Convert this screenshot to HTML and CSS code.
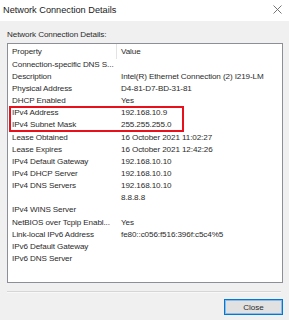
FILE: index.html
```html
<!DOCTYPE html>
<html lang="en">
<head>
    <meta charset="UTF-8">
    <meta name="viewport" content="width=device-width, initial-scale=1.0">
    <title>Network Connection Details</title>
    <link rel="stylesheet" href="styles.css">
</head>
<body>
    <div class="window">
        <div class="titlebar">
            <span class="title">Network Connection Details</span>
            <svg class="close-x" width="9" height="9" viewBox="0 0 9 9">
                <path d="M0.5 0.5 L8.5 8.5 M8.5 0.5 L0.5 8.5" stroke="#666" stroke-width="0.9" fill="none"/>
            </svg>
        </div>
        <div class="content">
            <div class="label">Network Connection Details:</div>
            <div class="list">
                <div class="list-head">
                    <div class="col-prop">Property</div>
                    <div class="col-val">Value</div>
                </div>
                <div class="row"><div class="col-prop">Connection-specific DNS S...</div><div class="col-val"></div></div>
                <div class="row"><div class="col-prop">Description</div><div class="col-val">Intel(R) Ethernet Connection (2) I219-LM</div></div>
                <div class="row"><div class="col-prop">Physical Address</div><div class="col-val">D4-81-D7-BD-31-81</div></div>
                <div class="row"><div class="col-prop">DHCP Enabled</div><div class="col-val">Yes</div></div>
                <div class="highlight">
                    <div class="row"><div class="col-prop">IPv4 Address</div><div class="col-val">192.168.10.9</div></div>
                    <div class="row"><div class="col-prop">IPv4 Subnet Mask</div><div class="col-val">255.255.255.0</div></div>
                </div>
                <div class="row"><div class="col-prop">Lease Obtained</div><div class="col-val">16 October 2021 11:02:27</div></div>
                <div class="row"><div class="col-prop">Lease Expires</div><div class="col-val">16 October 2021 12:42:26</div></div>
                <div class="row"><div class="col-prop">IPv4 Default Gateway</div><div class="col-val">192.168.10.10</div></div>
                <div class="row"><div class="col-prop">IPv4 DHCP Server</div><div class="col-val">192.168.10.10</div></div>
                <div class="row"><div class="col-prop">IPv4 DNS Servers</div><div class="col-val">192.168.10.10</div></div>
                <div class="row"><div class="col-prop"></div><div class="col-val">8.8.8.8</div></div>
                <div class="row"><div class="col-prop">IPv4 WINS Server</div><div class="col-val"></div></div>
                <div class="row"><div class="col-prop">NetBIOS over Tcpip Enabl...</div><div class="col-val">Yes</div></div>
                <div class="row"><div class="col-prop">Link-local IPv6 Address</div><div class="col-val">fe80::c056:f516:396f:c5c4%5</div></div>
                <div class="row"><div class="col-prop">IPv6 Default Gateway</div><div class="col-val"></div></div>
                <div class="row"><div class="col-prop">IPv6 DNS Server</div><div class="col-val"></div></div>
            </div>
            <div class="separator"></div>
            <div class="actions">
                <button class="btn-close">Close</button>
            </div>
        </div>
    </div>
</body>
</html>
```

FILE: styles.css
```css
html, body { margin: 0; padding: 0; }
body { width: 289px; height: 320px; overflow: hidden; font-family: "Liberation Sans", Arial, sans-serif; color: #2b2b2b; background: #f0f0f0; }
.window { display: flex; flex-direction: column; height: 320px; }
.titlebar { height: 19px; background: #fff; display: flex; align-items: center; justify-content: space-between; padding: 0 7px 2px 3px; font-size: 9.2px; color: #1a1a1a; }
.close-x { display: block; }
.content { flex: 1; display: flex; flex-direction: column; padding: 7px 6px 0 7px; background: #f0f0f0; }
.label { font-size: 8.1px; letter-spacing: -0.1px; line-height: 13px; margin-bottom: 2px; }
.list { height: 238px; border: 1px solid #8c9096; background: #fff; font-size: 8.1px; letter-spacing: -0.1px; }
.list-head { display: grid; grid-template-columns: 109px 1fr; height: 14.6px; align-items: center; }
.list-head .col-prop { border-right: 1px solid #e3e3e3; height: 100%; display: flex; align-items: center; }
.row { display: grid; grid-template-columns: 109px 1fr; height: 12.16px; line-height: 12.16px; white-space: nowrap; }
.col-prop { padding-left: 4px; overflow: hidden; }
.col-val { padding-left: 4px; }
.highlight { position: relative; }
.highlight::after { content: ""; position: absolute; left: 1px; top: -1px; width: 171px; height: 22px; border: 2px solid #e8101b; }
.separator { height: 1px; background: #d6d6d6; margin: 8px 2px 0 0; border-bottom: 1px solid #f8f8f8; }
.actions { display: flex; justify-content: flex-end; padding-top: 6px; }
.btn-close { width: 59px; height: 16px; padding: 0; border: 1px solid #0078d7; box-shadow: inset 0 0 0 1px #8dbbe6; background: #e1e1e1; font-family: "Liberation Sans", Arial, sans-serif; font-size: 8.1px; color: #2b2b2b; }
```
